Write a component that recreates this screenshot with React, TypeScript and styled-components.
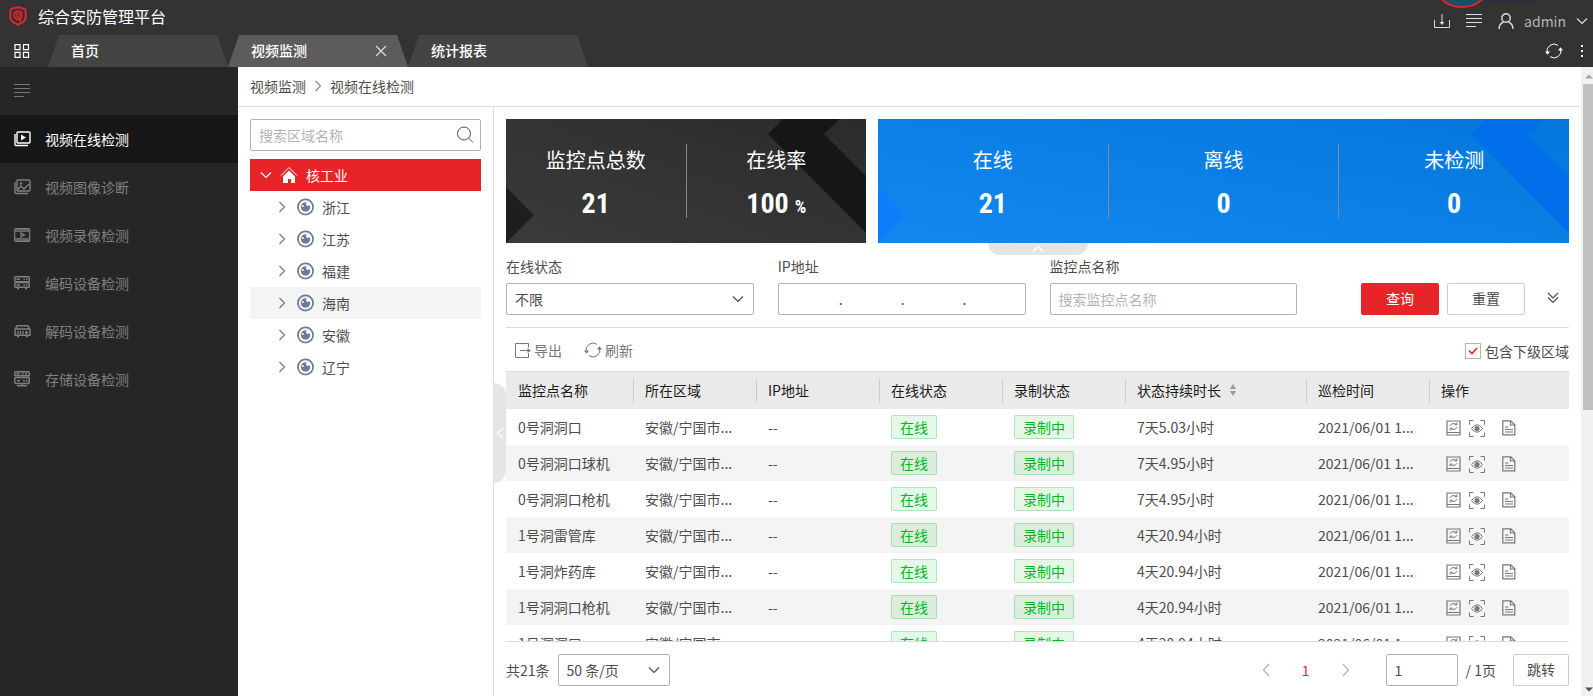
import React from 'react';
import styled, { createGlobalStyle, css } from 'styled-components';

const GlobalStyle = createGlobalStyle`
  *, *::before, *::after { box-sizing: border-box; }
  html, body, #root { height: 100%; }
  body { margin: 0; background: #fff; overflow: hidden; }
  body, button, input, select {
    font-family: "Noto Sans CJK SC", "Noto Sans", sans-serif;
    font-size: 14px;
    line-height: 20px;
    color: #4d4d4d;
  }
  button { border: 0; padding: 0; background: none; cursor: pointer; }
  a { color: inherit; text-decoration: none; }
  svg { display: block; flex: none; }
`;

/* ---------- icons ---------- */

const Icon = ({ w = 16, h = 16, sw = 1, children }: { w?: number; h?: number; sw?: number; children: React.ReactNode }) => (
  <svg width={w} height={h} viewBox={`0 0 ${w} ${h}`} fill="none" stroke="currentColor" strokeWidth={sw} aria-hidden="true">
    {children}
  </svg>
);

const ShieldLogo = () => (
  <svg width="18" height="20" viewBox="0 0 18 20" fill="none" aria-hidden="true">
    <path d="M9 1.200 15 2.600Q16.600 3 16.600 4.500V11.500C16.600 14.600 14.600 16 11.400 17.400L9 18.800L6.600 17.400C3.400 16 1.400 14.600 1.400 11.500V4.500Q1.400 3 3 2.600Z" stroke="#e8262b" strokeWidth="1.900" />
    <path d="M9.800 13.300C7 13.800 5.300 12 5.300 9.500C5.300 7 6.600 5.400 9 5.400C11.400 5.400 12.700 7 12.700 9.500C12.700 11.500 11.800 12.900 10.300 13.200L11.600 15.500" stroke="#e8262b" strokeWidth="1.600" />
    <ellipse cx="9" cy="9.400" rx="1.600" ry="1.900" stroke="#e8262b" strokeWidth="1.200" />
  </svg>
);
const GridIcon = () => (
  <Icon w={16} h={14} sw={1.2}>
    <path d="M1 .6h5v5h-5zM9.500 .6h5v5h-5zM1 8.400h5v5h-5zM9.500 8.400h5v5h-5z" />
  </Icon>
);
const LinesIcon = () => (
  <Icon w={16} h={14}><path d="M0 .5h16M0 4.500h16M0 8.500h16M0 12.500h10" /></Icon>
);
const DownloadIcon = () => (
  <Icon w={16} h={14}>
    <path d="M.5 6v7.500h15V6M8 0v10" /><path d="M5.500 8 8 11l2.500-3z" fill="currentColor" stroke="none" />
  </Icon>
);
const UserIcon = () => (
  <Icon w={16} h={16} sw={1.4}>
    <circle cx="8" cy="5" r="4.200" /><path d="M1 16c0-3.800 2-6 4.600-7M15 16c0-3.800-2-6-4.600-7" />
  </Icon>
);
const RefreshIcon = () => (
  <Icon w={18} h={16}>
    <path d="M2.300 10A7 7 0 0 1 13 2.300M15.700 6A7 7 0 0 1 5 13.700" />
    <path d="M0 8.500h5L2.500 11.700zM13 7.500h5L15.500 4.300z" fill="currentColor" stroke="none" />
  </Icon>
);
const MoreIcon = () => (
  <svg width="4" height="14" viewBox="0 0 4 14" fill="currentColor" aria-hidden="true">
    <path d="M1 1h2v2H1zM1 6h2v2H1zM1 11h2v2H1z" />
  </svg>
);
const CloseIcon = () => <Icon w={12} h={12} sw={1.2}><path d="m1 1 10 10M11 1 1 11" /></Icon>;
const ChevronDown = () => <Icon w={12} h={8} sw={1.2}><path d="m1 1.500 5 5 5-5" /></Icon>;
const ChevronUp = () => <Icon w={12} h={8} sw={1.2}><path d="m1 6.500 5-5 5 5" /></Icon>;
const ChevronRight = () => <Icon w={12} h={12} sw={1.2}><path d="m3.500 1 5 5-5 5" /></Icon>;
const ChevronLeft = ({ h = 12 }: { h?: number }) => (
  <Icon w={8} h={h} sw={1.2}><path d={`M7 1 1.500 ${h / 2} 7 ${h - 1}`} /></Icon>
);
const PageNext = () => <Icon w={8} h={14} sw={1.2}><path d="M1 1l5.500 6L1 13" /></Icon>;
const DoubleChevron = () => <Icon w={12} h={12} sw={1.2}><path d="m1 1 5 5 5-5M1 5.500l5 5 5-5" /></Icon>;
const SearchIcon = () => (
  <Icon w={18} h={18}><circle cx="8" cy="7.500" r="6.500" /><path d="m12.500 12 4.500 4.500" /></Icon>
);
const PlayStackIcon = () => (
  <Icon w={17} h={16} sw={1.4}>
    <rect x="3" y="1" width="13" height="11" rx="1" />
    <path d="M1 3v10.500a1 1 0 0 0 1 1h12" /><path d="M7 3.500v6l5-3z" fill="currentColor" stroke="none" />
  </Icon>
);
const PictureIcon = () => (
  <Icon w={17} h={16} sw={1.4}>
    <rect x="3" y="1" width="13" height="11" rx="1" />
    <path d="M1 3v10.500a1 1 0 0 0 1 1h12M4 10.500l3-3.500 3 3 5-5" /><circle cx="7" cy="4.500" r=".6" />
  </Icon>
);
const FilmIcon = () => (
  <Icon w={17} h={15} sw={1.2}>
    <rect x=".7" y=".7" width="15" height="12.600" rx="1" /><path d="M1 3.200h15M1 10.800h15" />
    <path d="M2.500 1.800h12M2.500 12.200h12" strokeWidth="1.600" strokeDasharray="1.600 1" /><path d="M7 5v4l3.500-2z" />
  </Icon>
);
const EncoderIcon = () => (
  <Icon w={17} h={14} sw={1.4}>
    <rect x=".8" y=".8" width="14.500" height="4.800" rx=".8" /><rect x=".8" y="6.500" width="14.500" height="4.800" rx=".8" />
    <path d="M2.500 3.200h3.500M9.500 3.200h1.300M12 3.200h1.500M2.500 9h3.500M9.500 9h1.300M12 9h1.500M3 12.500h2M11 12.500h2" />
  </Icon>
);
const DecoderIcon = () => (
  <Icon w={17} h={13} sw={1.4}>
    <path d="M1 4.500 3 .8h11l2 3.700v5.700H1zM1 4h15M4 6v3M6.500 6v3M9 6v3M3 11.500h2M12 11.500h2" /><circle cx="12.500" cy="7.500" r=".8" />
  </Icon>
);
const StorageIcon = () => (
  <Icon w={17} h={16} sw={1.4}>
    <rect x=".8" y=".8" width="14.500" height="4" rx=".8" /><rect x=".8" y="6.500" width="14.500" height="6" rx=".8" />
    <path d="M2.500 2.800h3M8 2.800h1.500M11 2.800h2M3 9.800h3M10 8.800v2M12.800 8.800v2M8 12v2M3 14.700h10" />
  </Icon>
);
const HomeIcon = () => (
  <Icon w={18} h={18}>
    <path d="M1 9.500 9 1.500l8 8" /><path d="M3 10.500 9 4.500l6 6V17h-4v-4H8v4H3z" fill="currentColor" stroke="none" />
  </Icon>
);
const RegionIcon = () => (
  <svg width="18" height="18" viewBox="0 0 18 18" fill="none" aria-hidden="true">
    <circle cx="9.500" cy="9" r="7.600" stroke="#6b7b93" strokeWidth="1.700" />
    <circle cx="9.500" cy="9" r="4.700" fill="#6b7b93" />
    <circle cx="12" cy="6" r="2" fill="#fff" />
    <circle cx="6.800" cy="8" r="1.100" fill="#fff" />
  </svg>
);
const ExportIcon = () => (
  <Icon w={17} h={16}>
    <path d="M14.500 5.500V1.500H1.500v14h13V11M6 8.500h8" /><path d="M13.500 6v5l3.500-2.500z" fill="currentColor" stroke="none" />
  </Icon>
);
const PatrolIcon = () => (
  <Icon w={15} h={16}>
    <path d="M1 1h13v14H1zM1 12.500h13" strokeWidth="1.200" />
    <path d="M4 5.800Q6.500 2 10.500 4.500M11 7.200Q8.500 11 4.500 8.500M10.800 2.500v2.300H8.500M4.200 10.500V8.200h2.300" />
  </Icon>
);
const EyeIcon = () => (
  <Icon w={16} h={17}>
    <path d="M.5 4.500v-4h4M11.500 .5h4v4M15.500 12.500v4h-4M4.500 16.500h-4v-4" />
    <path d="M2.500 8.500q5.500-7.500 11 0-5.500 7.500-11 0z" /><circle cx="8" cy="8.500" r="2.600" fill="currentColor" stroke="none" />
  </Icon>
);
const DocIcon = () => (
  <Icon w={14} h={16} sw={1.2}>
    <path d="M.8 .8h8l4 4v10H.8zM8.500 1v4H13M3 7h3.500M3 9.500h8M3 12h8" />
  </Icon>
);
const SortIcon = () => (
  <svg width="6" height="14" viewBox="0 0 6 14" fill="#999" aria-hidden="true"><path d="M0 6h6L3 1zM0 8h6l-3 5z" /></svg>
);
const CardPattern = ({ accent, corner }: { accent: string; corner: string }) => (
  <>
    <LeftShape><svg width="28" height="56" viewBox="0 0 28 56"><path d="M0 0l28 28L0 56z" fill={corner} /></svg></LeftShape>
    <RightShape>
      <svg width="98" height="114" viewBox="0 0 98 114"><path d="M15 0h56L56 15l42 42v57L0 15z" fill={accent} /></svg>
    </RightShape>
  </>
);

/* ---------- shell ---------- */

const Shell = styled.div`
  height: 100vh;
  display: flex;
  flex-direction: column;
`;
const Header = styled.header`
  position: relative;
  flex: none;
  background: #333;
  color: #fff;
  overflow: hidden;
`;
const FloatingPill = styled.div`
  position: absolute;
  top: -20px;
  right: 50px;
  width: 100px;
  height: 22px;
  border-radius: 10px;
  background: #2b303c;
`;
const FloatingBall = styled.div`
  position: absolute;
  top: -56px;
  right: 99px;
  width: 64px;
  height: 64px;
  border: 2px solid #e0261c;
  border-radius: 50%;
  background: #14506a;
`;
const BrandRow = styled.div`
  display: flex;
  justify-content: space-between;
  height: 35px;
  padding: 0 5px 0 9px;
`;
const Brand = styled.h1`
  display: flex;
  align-items: center;
  gap: 11px;
  margin: 0;
  padding-bottom: 3px;
  font-size: 16px;
  font-weight: 400;
`;
const Tools = styled.div`
  display: flex;
  align-items: center;
  gap: 16px;
  padding-top: 7px;
  color: #ddd;
`;
const ToolButton = styled.button`
  display: flex;
  align-items: center;
  gap: 10px;
  color: inherit;
`;
const UserName = styled.span`
  color: #b5b5b5;
`;
const TabRow = styled.div`
  display: flex;
  align-items: center;
  height: 32px;
`;
const AppsButton = styled.button`
  display: flex;
  width: 48px;
  padding-left: 14px;
  color: #fff;
`;
const Tab = styled.div<{ $active?: boolean }>`
  display: flex;
  align-items: center;
  justify-content: space-between;
  width: 180px;
  height: 32px;
  padding: 0 21px 2px 23px;
  clip-path: polygon(11px 0, 169px 0, 180px 100%, 0 100%);
  background: ${p => (p.$active ? '#5c5c5c' : '#444')};
  font-weight: 500;
`;
const TabClose = styled.button`
  padding-top: 2px;
  color: #ddd;
`;
const TabTools = styled.div`
  display: flex;
  align-items: center;
  gap: 17px;
  margin-left: auto;
  padding-right: 9px;
`;
const Body = styled.div`
  flex: 1;
  display: flex;
  min-height: 0;
`;
const Sidebar = styled.nav`
  flex: none;
  width: 238px;
  background: #262626;
`;
const SidebarToggle = styled.button`
  display: flex;
  align-items: center;
  width: 100%;
  height: 48px;
  padding-left: 14px;
  color: #777;
`;
const NavItem = styled.a<{ $active?: boolean }>`
  display: flex;
  align-items: center;
  gap: 14px;
  height: 48px;
  padding-left: 14px;
  color: ${p => (p.$active ? '#fff' : '#808080')};
  background: ${p => (p.$active ? '#171717' : 'none')};
`;
const Page = styled.div`
  flex: 1;
  display: flex;
  flex-direction: column;
  min-width: 0;
`;
const Breadcrumb = styled.nav`
  flex: none;
  display: flex;
  align-items: center;
  gap: 6px;
  height: 40px;
  padding: 0 12px 2px;
  border-bottom: 1px solid #ddd;
`;
const CrumbArrow = styled.span`
  color: #888;
`;
const Columns = styled.div`
  flex: 1;
  display: flex;
  min-height: 0;
`;
const ScrollTrack = styled.div`
  flex: none;
  display: flex;
  flex-direction: column;
  width: 12px;
  padding: 7px 0 4px 2px;
  background: #f1f1f1;
  overflow: hidden;
`;
const ScrollThumb = styled.div`
  width: 14px;
  height: 326px;
  margin: 5px 0 auto;
  background: #c1c1c1;
`;

/* ---------- tree ---------- */

const TreePanel = styled.aside`
  flex: none;
  width: 256px;
  padding: 12px;
  border-right: 1px solid #ddd;
`;
const boxed = css`
  width: 100%;
  height: 32px;
  border: 1px solid #b3b3b3;
  border-radius: 2px;
  background: #fff;
`;
const SearchBox = styled.label`
  ${boxed}
  display: flex;
  align-items: center;
  padding: 0 6px 0 8px;
  margin-bottom: 8px;
`;
const BareInput = styled.input`
  flex: 1;
  min-width: 0;
  width: 0;
  padding: 0;
  border: 0;
  outline: 0;
  background: none;
  text-align: inherit;
  &::placeholder { color: #b3b3b3; opacity: 1; }
`;
const TreeList = styled.ul`
  margin: 0;
  padding: 0;
  list-style: none;
`;
const TreeRow = styled.button<{ $root?: boolean; $hover?: boolean }>`
  display: flex;
  align-items: center;
  gap: 8px;
  width: 100%;
  height: 32px;
  padding-left: ${p => (p.$root ? 10 : 26)}px;
  background: ${p => (p.$root ? '#e72528' : p.$hover ? '#f4f4f4' : 'none')};
  color: ${p => (p.$root ? '#fff' : '#4d4d4d')};
`;
const TreeArrow = styled.span`
  opacity: 0.75;
`;

/* ---------- main ---------- */

const Main = styled.main`
  position: relative;
  flex: 1;
  display: flex;
  flex-direction: column;
  min-width: 0;
  padding: 12px;
  padding-bottom: 0;
`;
const SideHandle = styled.button`
  position: absolute;
  left: 0;
  top: 276px;
  display: flex;
  align-items: center;
  justify-content: center;
  width: 12px;
  height: 100px;
  border-radius: 0 12px 12px 0;
  background: #e5e5e5;
  color: #fff;
`;
const Stats = styled.section`
  position: relative;
  flex: none;
  display: flex;
  gap: 12px;
`;
const TopHandle = styled.button`
  position: absolute;
  left: 50%;
  top: 100%;
  display: flex;
  align-items: center;
  justify-content: center;
  width: 100px;
  height: 12px;
  margin-left: -50px;
  border-radius: 0 0 12px 12px;
  background: #e5e5e5;
  color: #fff;
`;
const StatCard = styled.div<{ $blue?: boolean }>`
  position: relative;
  display: flex;
  align-items: center;
  height: 124px;
  ${p => (p.$blue
    ? css`flex: 1; background: linear-gradient(to top right, #1289f0, #0376dc);`
    : css`flex: 0 0 360px; background: linear-gradient(to top right, #3b3b3b, #2b2b2b);`)}
`;
const LeftShape = styled.div`
  position: absolute;
  left: 0;
  bottom: 0;
`;
const RightShape = styled.div`
  position: absolute;
  right: 0;
  top: 0;
`;
const Stat = styled.div`
  position: relative;
  flex: 1;
  display: flex;
  flex-direction: column;
  align-items: center;
  justify-content: center;
  gap: 14px;
  height: 74px;
  padding-top: 4px;
  color: #fff;
  & + & { border-left: 1px solid #888; }
`;
const StatLabel = styled.span`
  font-size: 20px;
  line-height: 28px;
`;
const StatValue = styled.strong`
  display: flex;
  align-items: baseline;
  gap: 6px;
  height: 32px;
  font-family: "Roboto Condensed", "Open Sans Condensed", Roboto, sans-serif;
  font-size: 28px;
  line-height: 32px;
  font-weight: 700;
`;
const StatUnit = styled.small`
  font-size: 18px;
`;
const Filters = styled.form`
  flex: none;
  display: grid;
  grid-template-columns: repeat(4, minmax(0, 1fr));
  column-gap: 24px;
  align-items: end;
  margin-top: 13px;
  padding-bottom: 12px;
  border-bottom: 1px solid #ddd;
`;
const Field = styled.div`
  display: flex;
  flex-direction: column;
  gap: 7px;
`;
const SelectWrap = styled.div`
  position: relative;
`;
const Select = styled.select`
  ${boxed}
  appearance: none;
  padding: 0 8px;
  outline: 0;
`;
const SelectArrow = styled.span`
  position: absolute;
  right: 10px;
  top: 12px;
  pointer-events: none;
`;
const TextInput = styled.input`
  ${boxed}
  padding: 0 8px;
  outline: 0;
  &::placeholder { color: #b3b3b3; opacity: 1; }
`;
const IpBox = styled.div`
  ${boxed}
  display: flex;
  align-items: center;
  padding-left: 2px;
  text-align: center;
`;
const Actions = styled.div`
  display: flex;
  align-items: center;
  justify-content: flex-end;
  gap: 8px;
`;
const Button = styled.button<{ $primary?: boolean; $small?: boolean }>`
  width: ${p => (p.$small ? 56 : 78)}px;
  height: 32px;
  padding-bottom: 2px;
  border: 1px solid ${p => (p.$primary ? '#e72528' : '#ccc')};
  border-radius: 2px;
  background: ${p => (p.$primary ? '#e72528' : '#fff')};
  color: ${p => (p.$primary ? '#fff' : '#4d4d4d')};
`;
const MoreFilters = styled.button`
  display: flex;
  padding: 0 10px 2px 14px;
`;
const Toolbar = styled.div`
  flex: none;
  display: flex;
  align-items: center;
  gap: 22px;
  height: 43px;
  padding-left: 8px;
`;
const TextButton = styled.button`
  display: flex;
  align-items: center;
  gap: 3px;
  color: #777;
`;
const CheckLabel = styled.label`
  position: relative;
  display: flex;
  align-items: center;
  gap: 4px;
  margin-left: auto;
  padding-top: 2px;
`;
const Checkbox = styled.input`
  appearance: none;
  width: 16px;
  height: 16px;
  margin: 0;
  border: 1px solid #b3b3b3;
  background: #fff;
`;
const CheckMark = styled.span`
  position: absolute;
  left: 3px;
  color: #e72528;
  pointer-events: none;
`;
const TableArea = styled.div`
  flex: 1;
  min-height: 0;
  overflow: hidden;
  border-top: 1px solid #ddd;
  border-bottom: 1px solid #ddd;
`;
const Table = styled.table`
  width: 100%;
  table-layout: fixed;
  border-collapse: collapse;
`;
const Th = styled.th`
  height: 37px;
  padding: 0;
  background: #eaeaea;
  color: #1a1a1a;
  font-weight: 400;
  text-align: left;
`;
const ThInner = styled.div<{ $last?: boolean }>`
  display: flex;
  align-items: center;
  gap: 9px;
  height: 24px;
  padding: 0 0 2px 11px;
  border-right: ${p => (p.$last ? '0' : '1px solid #ccc')};
  th:first-child > & { padding-left: 12px; }
`;
const Row = styled.tr`
  &:nth-child(even) { background: #f4f4f4; }
`;
const Td = styled.td`
  height: 36px;
  padding: 0 11px;
  overflow: hidden;
  white-space: nowrap;
  text-overflow: ellipsis;
  &:first-child { padding-left: 12px; }
`;
const Tag = styled.span`
  display: inline-block;
  height: 24px;
  padding: 0 8px;
  border: 1px solid rgba(0, 185, 30, 0.25);
  border-radius: 2px;
  background: rgba(0, 185, 30, 0.1);
  color: #00b91e;
  line-height: 22px;
  vertical-align: middle;
`;
const RowActions = styled.div`
  display: flex;
  align-items: center;
  padding-top: 2px;
`;
const IconButton = styled.button<{ $spaced?: boolean }>`
  display: flex;
  justify-content: center;
  width: 24px;
  margin-left: ${p => (p.$spaced ? 8 : 0)}px;
  color: #777;
`;
const Footer = styled.footer`
  flex: none;
  display: flex;
  align-items: center;
  gap: 8px;
  height: 54px;
  padding-top: 2px;
`;
const PageSize = styled(SelectWrap)`
  width: 112px;
`;
const Pager = styled.nav`
  display: flex;
  align-items: center;
  gap: 32px;
  margin-left: auto;
  margin-right: 28px;
`;
const PagerArrow = styled.button`
  color: #b3b3b3;
`;
const Current = styled.a`
  color: #e72528;
`;
const PageInput = styled(TextInput)`
  width: 72px;
`;
const Total = styled.span`
  margin-right: 9px;
`;

/* ---------- data ---------- */

const NAV = [
  { label: '视频在线检测', icon: <PlayStackIcon /> },
  { label: '视频图像诊断', icon: <PictureIcon /> },
  { label: '视频录像检测', icon: <FilmIcon /> },
  { label: '编码设备检测', icon: <EncoderIcon /> },
  { label: '解码设备检测', icon: <DecoderIcon /> },
  { label: '存储设备检测', icon: <StorageIcon /> },
];
const REGIONS = ['浙江', '江苏', '福建', '海南', '安徽', '辽宁'];
const COLUMNS = [
  { label: '监控点名称', width: 128 },
  { label: '所在区域', width: 123 },
  { label: 'IP地址', width: 123 },
  { label: '在线状态', width: 123 },
  { label: '录制状态', width: 123 },
  { label: '状态持续时长', width: 181, sortable: true },
  { label: '巡检时间', width: 123 },
  { label: '操作', width: 139 },
];
const ROWS = [
  ['0号洞洞口', '7天5.03小时'],
  ['0号洞洞口球机', '7天4.95小时'],
  ['0号洞洞口枪机', '7天4.95小时'],
  ['1号洞雷管库', '4天20.94小时'],
  ['1号洞炸药库', '4天20.94小时'],
  ['1号洞洞口枪机', '4天20.94小时'],
  ['1号洞洞口', '4天20.94小时'],
];

export default function App() {
  return (
    <Shell>
      <GlobalStyle />
      <Header>
        <FloatingPill />
        <FloatingBall />
        <BrandRow>
          <Brand><ShieldLogo />综合安防管理平台</Brand>
          <Tools>
            <ToolButton aria-label="下载"><DownloadIcon /></ToolButton>
            <ToolButton aria-label="任务"><LinesIcon /></ToolButton>
            <ToolButton><UserIcon /><UserName>admin</UserName><ChevronDown /></ToolButton>
          </Tools>
        </BrandRow>
        <TabRow>
          <AppsButton aria-label="应用"><GridIcon /></AppsButton>
          <Tab><a href="#home">首页</a></Tab>
          <Tab $active>
            <a href="#video">视频监测</a>
            <TabClose aria-label="关闭"><CloseIcon /></TabClose>
          </Tab>
          <Tab><a href="#report">统计报表</a></Tab>
          <TabTools>
            <ToolButton aria-label="刷新"><RefreshIcon /></ToolButton>
            <ToolButton aria-label="更多"><MoreIcon /></ToolButton>
          </TabTools>
        </TabRow>
      </Header>
      <Body>
        <Sidebar>
          <SidebarToggle aria-label="收起菜单"><LinesIcon /></SidebarToggle>
          {NAV.map((n, i) => (
            <NavItem key={n.label} href={`#nav-${i}`} $active={i === 0}>{n.icon}{n.label}</NavItem>
          ))}
        </Sidebar>
        <Page>
          <Breadcrumb>
            <a href="#video">视频监测</a>
            <CrumbArrow><ChevronRight /></CrumbArrow>
            <span>视频在线检测</span>
          </Breadcrumb>
          <Columns>
            <TreePanel>
              <SearchBox>
                <BareInput placeholder="搜索区域名称" aria-label="搜索区域名称" />
                <SearchIcon />
              </SearchBox>
              <TreeList>
                <li><TreeRow $root><ChevronDown /><HomeIcon />核工业</TreeRow></li>
                {REGIONS.map(r => (
                  <li key={r}>
                    <TreeRow $hover={r === '海南'}><TreeArrow><ChevronRight /></TreeArrow><RegionIcon />{r}</TreeRow>
                  </li>
                ))}
              </TreeList>
            </TreePanel>
            <Main>
              <SideHandle aria-label="收起区域"><ChevronLeft /></SideHandle>
              <Stats>
                <StatCard>
                  <CardPattern accent="#161616" corner="#1e1e1e" />
                  <Stat><StatLabel>监控点总数</StatLabel><StatValue>21</StatValue></Stat>
                  <Stat><StatLabel>在线率</StatLabel><StatValue>100<StatUnit>%</StatUnit></StatValue></Stat>
                </StatCard>
                <StatCard $blue>
                  <CardPattern accent="#006ee8" corner="#0d7df9" />
                  <Stat><StatLabel>在线</StatLabel><StatValue>21</StatValue></Stat>
                  <Stat><StatLabel>离线</StatLabel><StatValue>0</StatValue></Stat>
                  <Stat><StatLabel>未检测</StatLabel><StatValue>0</StatValue></Stat>
                </StatCard>
                <TopHandle aria-label="收起统计"><ChevronUp /></TopHandle>
              </Stats>
              <Filters onSubmit={e => e.preventDefault()}>
                <Field>
                  <label htmlFor="status">在线状态</label>
                  <SelectWrap>
                    <Select id="status"><option>不限</option></Select>
                    <SelectArrow><ChevronDown /></SelectArrow>
                  </SelectWrap>
                </Field>
                <Field>
                  <label htmlFor="ip1">IP地址</label>
                  <IpBox>
                    <BareInput id="ip1" />.
                    <BareInput aria-label="IP地址第2段" />.
                    <BareInput aria-label="IP地址第3段" />.
                    <BareInput aria-label="IP地址第4段" />
                  </IpBox>
                </Field>
                <Field>
                  <label htmlFor="point">监控点名称</label>
                  <TextInput id="point" placeholder="搜索监控点名称" />
                </Field>
                <Actions>
                  <Button $primary type="submit">查询</Button>
                  <Button type="reset">重置</Button>
                  <MoreFilters type="button" aria-label="展开"><DoubleChevron /></MoreFilters>
                </Actions>
              </Filters>
              <Toolbar>
                <TextButton><ExportIcon />导出</TextButton>
                <TextButton><RefreshIcon />刷新</TextButton>
                <CheckLabel>
                  <Checkbox type="checkbox" defaultChecked />
                  <CheckMark><Icon w={10} h={8} sw={1.6}><path d="m1 3.500 3 3 5-5.500" /></Icon></CheckMark>
                  包含下级区域
                </CheckLabel>
              </Toolbar>
              <TableArea>
                <Table>
                  <colgroup>{COLUMNS.map(c => <col key={c.label} width={c.width} />)}</colgroup>
                  <thead>
                    <tr>
                      {COLUMNS.map((c, i) => (
                        <Th key={c.label} scope="col">
                          <ThInner $last={i === COLUMNS.length - 1}>{c.label}{c.sortable && <SortIcon />}</ThInner>
                        </Th>
                      ))}
                    </tr>
                  </thead>
                  <tbody>
                    {ROWS.map(([name, time]) => (
                      <Row key={name}>
                        <Td>{name}</Td>
                        <Td>安徽/宁国市...</Td>
                        <Td>--</Td>
                        <Td><Tag>在线</Tag></Td>
                        <Td><Tag>录制中</Tag></Td>
                        <Td>{time}</Td>
                        <Td>2021/06/01 1...</Td>
                        <Td>
                          <RowActions>
                            <IconButton aria-label="巡检"><PatrolIcon /></IconButton>
                            <IconButton aria-label="预览"><EyeIcon /></IconButton>
                            <IconButton aria-label="详情" $spaced><DocIcon /></IconButton>
                          </RowActions>
                        </Td>
                      </Row>
                    ))}
                  </tbody>
                </Table>
              </TableArea>
              <Footer>
                <span>共21条</span>
                <PageSize>
                  <Select aria-label="每页条数"><option>50 条/页</option></Select>
                  <SelectArrow><ChevronDown /></SelectArrow>
                </PageSize>
                <Pager>
                  <PagerArrow aria-label="上一页"><ChevronLeft h={14} /></PagerArrow>
                  <Current href="#page-1">1</Current>
                  <PagerArrow aria-label="下一页"><PageNext /></PagerArrow>
                </Pager>
                <PageInput aria-label="页码" defaultValue="1" />
                <Total>/ 1页</Total>
                <Button $small>跳转</Button>
              </Footer>
            </Main>
          </Columns>
        </Page>
        <ScrollTrack aria-hidden="true">
          <svg width="10" height="5" viewBox="0 0 10 5"><path d="M2 4.500h8L6 .5z" fill="#a3a3a3" /></svg>
          <ScrollThumb />
          <svg width="10" height="5" viewBox="0 0 10 5"><path d="M2 .5h8L6 4.500z" fill="#505050" /></svg>
        </ScrollTrack>
      </Body>
    </Shell>
  );
}
